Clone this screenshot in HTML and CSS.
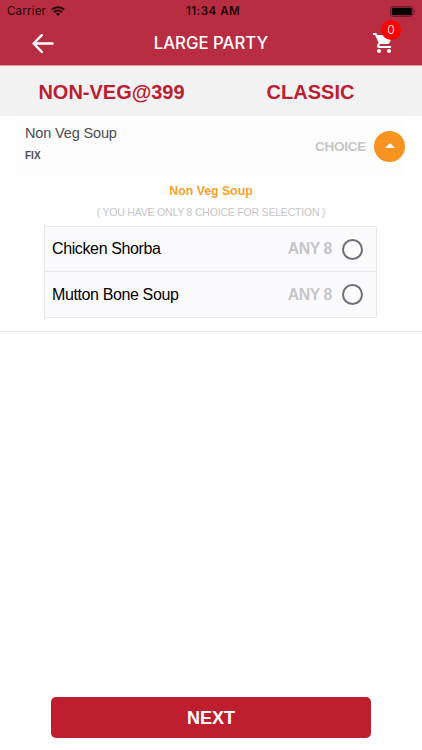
FILE: index.html
```
<!DOCTYPE html>
<html lang="en">
<head>
    <meta charset="UTF-8">
    <meta name="viewport" content="width=device-width, initial-scale=1">
    <title>Large Party</title>
    <link rel="stylesheet" href="styles.css">
</head>
<body>

    <header class="header">
        <div class="status-bar">
            <div class="carrier">
                <span>Carrier</span>
                <svg class="wifi" viewBox="0 0 14 10">
                    <path d="M0.8 3.8a8.8 8.8 0 0 1 12.4 0M3 6.3a5.6 5.6 0 0 1 8 0" fill="none" stroke="#240509" stroke-width="2"/>
                    <path d="M4.7 7.8a3.3 3.3 0 0 1 4.6 0L7 10z" fill="#240509"/>
                </svg>
            </div>
            <span class="time">11:34 AM</span>
            <svg class="battery" viewBox="0 0 26 11">
                <rect x="0.5" y="0.5" width="22.5" height="10" rx="2.4" fill="none" stroke="#731a2a"/>
                <rect x="1.8" y="1.8" width="20" height="7.4" rx="1" fill="#000"/>
                <path d="M24.2 3.6c1.6.6 1.6 3.2 0 3.8z" fill="#731a2a"/>
            </svg>
        </div>
        <nav class="nav">
            <svg class="back" viewBox="0 0 22 19">
                <path d="M9.8 1.2L1.6 9.5l8.2 8.3M1.6 9.5h19" fill="none" stroke="#fff" stroke-width="2.4" stroke-linecap="round" stroke-linejoin="round"/>
            </svg>
            <h1>LARGE PARTY</h1>
            <div class="cart">
                <svg viewBox="0 0 24 24">
                    <path fill="#fff" d="M7 18c-1.1 0-1.99.9-1.99 2S5.9 22 7 22s2-.9 2-2-.9-2-2-2zM1 2v2h2l3.6 7.59-1.35 2.45c-.16.28-.25.61-.25.96 0 1.1.9 2 2 2h12v-2H7.42c-.14 0-.25-.11-.25-.25l.03-.12.9-1.63h7.45c.75 0 1.41-.41 1.75-1.03l3.58-6.49A1 1 0 0 0 20 4H5.21l-.94-2H1zm16 16c-1.1 0-1.99.9-1.99 2s.89 2 1.99 2 2-.9 2-2-.9-2-2-2z"/>
                </svg>
                <span class="badge">0</span>
            </div>
        </nav>
    </header>

    <div class="package">
        <h2>NON-VEG@399</h2>
        <h2>CLASSIC</h2>
    </div>

    <section class="category">
        <div class="category-head">
            <div>
                <div class="category-name">Non Veg Soup</div>
                <div class="category-type">FIX</div>
            </div>
            <div class="choice">
                <span>CHOICE</span>
                <button class="toggle" aria-label="Collapse">
                    <svg viewBox="0 0 10 5"><path d="M0 5l5-5 5 5z" fill="#fff"/></svg>
                </button>
            </div>
        </div>

        <h3>Non Veg Soup</h3>
        <p class="hint">( YOU HAVE ONLY 8 CHOICE FOR SELECTION )</p>

        <ul class="items">
            <li>
                <span class="item-name">Chicken Shorba</span>
                <span class="any">ANY 8</span>
                <span class="radio"></span>
            </li>
            <li>
                <span class="item-name">Mutton Bone Soup</span>
                <span class="any">ANY 8</span>
                <span class="radio"></span>
            </li>
        </ul>
    </section>

    <button class="next">NEXT</button>

</body>
</html>
```
FILE: styles.css
```
* {
    box-sizing: border-box;
}

body {
    margin: 0;
    height: 750px;
    display: flex;
    flex-direction: column;
    background: #fff;
    font-family: "Liberation Sans", Arial, sans-serif;
    overflow: hidden;
}

h1, h2, h3, p, ul {
    margin: 0;
    padding: 0;
}

svg {
    display: block;
}

button {
    border: none;
    padding: 0;
    font-family: inherit;
}

/* Header */
.header {
    height: 66px;
    background: #b92d43;
    border-bottom: 1px solid #dc96a1;
    font-family: Inter, "Liberation Sans", sans-serif;
}

.status-bar {
    height: 22px;
    padding: 0 6px 0 7px;
    display: grid;
    grid-template-columns: 1fr auto 1fr;
    align-items: center;
    color: #240509;
    font-size: 11.5px;
}

.carrier {
    display: flex;
    align-items: center;
    gap: 5px;
    letter-spacing: 0.2px;
}

.wifi {
    width: 14px;
    height: 10px;
}

.time {
    padding-left: 3px;
    font-weight: 600;
    letter-spacing: 0.5px;
}

.battery {
    width: 26px;
    height: 11px;
    justify-self: end;
}

.nav {
    height: 42px;
    padding: 0 26px 0 32px;
    display: flex;
    align-items: center;
    justify-content: space-between;
}

.back {
    width: 22px;
    height: 19px;
}

.nav h1 {
    margin-right: 4px;
    color: #fff;
    font-size: 16.8px;
    font-weight: 500;
}

.cart {
    position: relative;
}

.cart svg {
    width: 24px;
    height: 24px;
}

.badge {
    position: absolute;
    top: -11px;
    left: 9px;
    width: 20px;
    height: 20px;
    border-radius: 50%;
    background: #fe0000;
    color: #fff;
    font-size: 12px;
    font-weight: 300;
    line-height: 20px;
    text-align: center;
}

/* Package title */
.package {
    height: 50px;
    padding: 0 12px;
    display: grid;
    grid-template-columns: 1fr 1fr;
    align-items: center;
    background: #f2f2f2;
    text-align: center;
}

.package h2 {
    padding-top: 1px;
    color: #b92031;
    font-size: 20px;
    line-height: 26px;
}

/* Category */
.category {
    height: 216px;
    border-bottom: 1px solid #e6e6e8;
}

.category-head {
    height: 60px;
    margin: 0 17px 0 16px;
    padding-left: 9px;
    display: flex;
    justify-content: space-between;
    background: #fdfdfd;
}

.category-name {
    margin-top: 8px;
    color: #4b4d55;
    font-size: 14.5px;
    line-height: 18px;
    letter-spacing: -0.15px;
}

.category-type {
    margin-top: 6px;
    color: #4b4d55;
    font-size: 10px;
    font-weight: bold;
    line-height: 16px;
}

.choice {
    display: flex;
    align-items: center;
    gap: 8px;
    color: #c5c5c7;
    font-size: 13.5px;
    font-weight: bold;
    letter-spacing: -0.25px;
}

.toggle {
    width: 31px;
    height: 31px;
    border-radius: 50%;
    background: #f7931e;
}

.toggle svg {
    width: 10px;
    height: 5px;
    margin: -2px auto 0;
}

.category h3 {
    margin-top: 7px;
    color: #f7a02c;
    font-size: 12.3px;
    line-height: 16px;
    text-align: center;
}

.hint {
    margin-top: 6px;
    color: #c5c5c7;
    font-size: 10.5px;
    line-height: 14px;
    letter-spacing: -0.2px;
    text-align: center;
}

.items {
    margin: 7px 45px 0 44px;
    list-style: none;
    border: 1px solid #e6e6e9;
    background: #fbfbfd;
}

.items li {
    height: 44px;
    padding: 0 13px 0 7px;
    display: flex;
    align-items: center;
    font-size: 16px;
    letter-spacing: -0.38px;
}

.items li + li {
    height: 46px;
    border-top: 1px solid #e6e6e9;
}

.item-name {
    flex: 1;
    color: #000;
}

.any {
    margin-right: 10px;
    color: #c5c5c7;
    font-size: 15.8px;
    font-weight: bold;
}

.radio {
    width: 21px;
    height: 21px;
    border: 2px solid #6f6f73;
    border-radius: 50%;
}

/* Bottom button */
.next {
    width: 320px;
    height: 41px;
    margin: auto auto 12px 51px;
    padding-top: 1px;
    border-radius: 5px;
    background: #be1e2d;
    color: #fff;
    font-size: 18px;
    font-weight: bold;
}
```
